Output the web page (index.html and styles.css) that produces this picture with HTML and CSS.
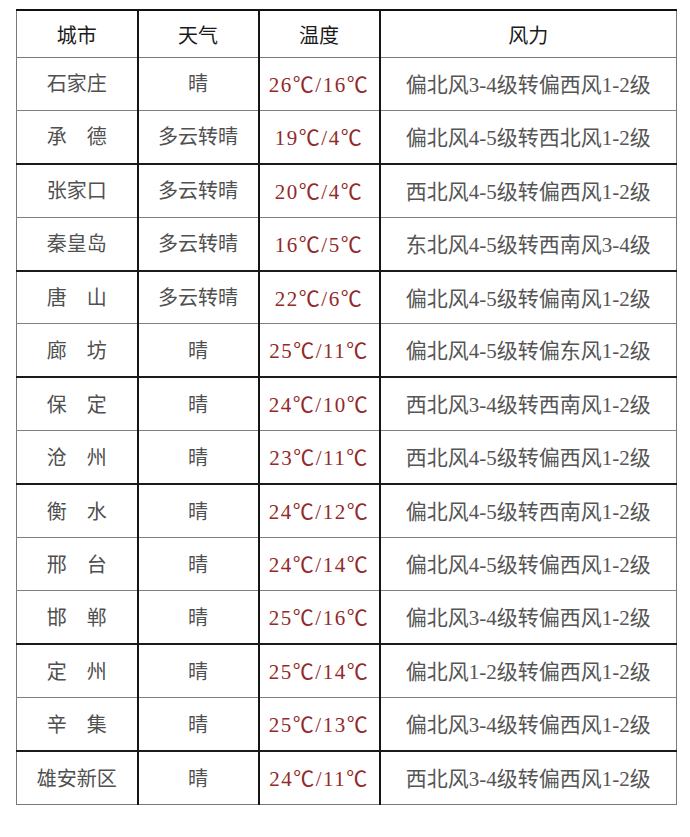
FILE: index.html
```html
<!DOCTYPE html>
<html lang="zh-CN">
<head>
<meta charset="utf-8">
<title>天气预报</title>
<link rel="stylesheet" href="styles.css">
</head>
<body>
<div class="page">
  <table class="weather">
    <colgroup>
      <col class="c-city">
      <col class="c-wx">
      <col class="c-temp">
      <col class="c-wind">
    </colgroup>
    <thead>
      <tr class="head">
        <th>城市</th>
        <th>天气</th>
        <th>温度</th>
        <th>风力</th>
      </tr>
    </thead>
    <tbody>
      <tr class="g"><td>石家庄</td><td>晴</td><td class="t">26℃/16℃</td><td class="w">偏北风3-4级转偏西风1-2级</td></tr>
      <tr class="k"><td>承　德</td><td>多云转晴</td><td class="t">19℃/4℃</td><td class="w">偏北风4-5级转西北风1-2级</td></tr>
      <tr class="g"><td>张家口</td><td>多云转晴</td><td class="t">20℃/4℃</td><td class="w">西北风4-5级转偏西风1-2级</td></tr>
      <tr class="k"><td>秦皇岛</td><td>多云转晴</td><td class="t">16℃/5℃</td><td class="w">东北风4-5级转西南风3-4级</td></tr>
      <tr class="g"><td>唐　山</td><td>多云转晴</td><td class="t">22℃/6℃</td><td class="w">偏北风4-5级转偏南风1-2级</td></tr>
      <tr class="k"><td>廊　坊</td><td>晴</td><td class="t">25℃/11℃</td><td class="w">偏北风4-5级转偏东风1-2级</td></tr>
      <tr class="g"><td>保　定</td><td>晴</td><td class="t">24℃/10℃</td><td class="w">西北风3-4级转西南风1-2级</td></tr>
      <tr class="k"><td>沧　州</td><td>晴</td><td class="t">23℃/11℃</td><td class="w">西北风4-5级转偏西风1-2级</td></tr>
      <tr class="g"><td>衡　水</td><td>晴</td><td class="t">24℃/12℃</td><td class="w">偏北风4-5级转西南风1-2级</td></tr>
      <tr class="g"><td>邢　台</td><td>晴</td><td class="t">24℃/14℃</td><td class="w">偏北风4-5级转偏西风1-2级</td></tr>
      <tr class="k"><td>邯　郸</td><td>晴</td><td class="t">25℃/16℃</td><td class="w">偏北风3-4级转偏西风1-2级</td></tr>
      <tr class="g"><td>定　州</td><td>晴</td><td class="t">25℃/14℃</td><td class="w">偏北风1-2级转偏西风1-2级</td></tr>
      <tr class="k"><td>辛　集</td><td>晴</td><td class="t">25℃/13℃</td><td class="w">偏北风3-4级转偏西风1-2级</td></tr>
      <tr class="g last"><td>雄安新区</td><td>晴</td><td class="t">24℃/11℃</td><td class="w">西北风3-4级转偏西风1-2级</td></tr>
    </tbody>
  </table>
</div>
</body>
</html>
```
FILE: styles.css
```css
html, body {
  margin: 0;
  padding: 0;
  background: #ffffff;
}
.page {
  padding: 9px 0 0 16px;
}
.weather {
  border-collapse: collapse;
  table-layout: fixed;
  width: 660px;
  font-family: "Liberation Serif", "Noto Sans CJK SC", serif;
  font-size: 20px;
  color: #505050;
  border-left: 1px solid #7a7a7a;
  border-right: 1px solid #7a7a7a;
  border-top: 2px solid #111;
}
.c-city, .c-wx, .c-temp { width: 121px; }
.c-wind { width: 297px; }
.weather th,
.weather td {
  padding: 0;
  text-align: center;
  vertical-align: middle;
  border-right: 2px solid #151515;
}
.weather th:last-child,
.weather td:last-child {
  border-right: 1px solid #7a7a7a;
}
.head {
  height: 47px;
  border-bottom: 1px solid #7a7a7a;
}
.head th {
  font-weight: normal;
  color: #1a1a1a;
  font-size: 20px;
  padding-top: 2px;
}
tbody tr {
  height: 53.4px;
}
tr.g { border-bottom: 1px solid #808080; }
tr.k { border-bottom: 2px solid #1a1a1a; }
tr.last { border-bottom: 1px solid #7a7a7a; }
.weather td {
  padding-bottom: 2px;
}
.t {
  color: #922a2a;
  font-size: 21px;
  letter-spacing: 1.5px;
}
.w {
  font-size: 21px;
  color: #555;
}
```
